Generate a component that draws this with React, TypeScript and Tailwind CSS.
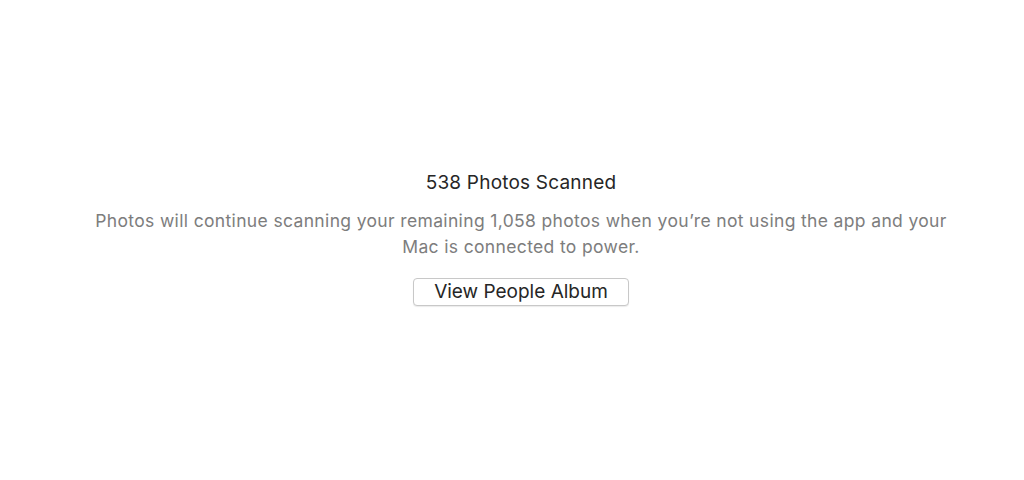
export default function App() {
  return (
    <div className="w-[1024px] h-[480px] bg-white flex flex-col items-center pl-[18px] font-['Inter',sans-serif]">
      <div className="mt-[170px] text-[19px] leading-[26px] tracking-[0.2px] text-[#262626]">538 Photos Scanned</div>
      <p className="mt-[12px] max-w-[880px] text-center text-[17.5px] leading-[26px] tracking-[0.35px] text-[#7d7d7d]">
        Photos will continue scanning your remaining 1,058 photos when you’re not using the app and your Mac is connected to power.
      </p>
      <button className="mt-[18px] w-[216px] h-[28px] rounded-[4px] border border-[#c8c8c8] bg-white text-[19px] leading-[26px] text-[#262626] shadow-[0_1px_1px_rgba(0,0,0,0.08)]">
        View People Album
      </button>
    </div>
  );
}
